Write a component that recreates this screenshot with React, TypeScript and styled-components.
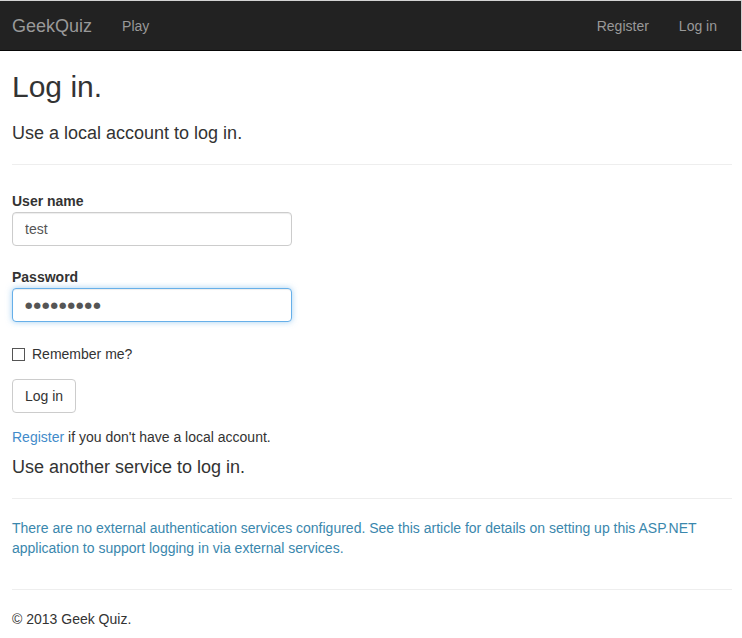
import React from "react";
import styled, { createGlobalStyle } from "styled-components";

const Global = createGlobalStyle`
  html, body { margin: 0; padding: 0; background: #fff; }
  body {
    font-family: "Liberation Sans", Arial, sans-serif;
    font-size: 14px;
    line-height: 1.428571;
    color: #333;
    border-top: 1px solid #d4d4d4;
  }
  * { box-sizing: border-box; }
`;

const Navbar = styled.nav`
  display: flex;
  align-items: center;
  height: 50px;
  background: #222;
  border-bottom: 1px solid #080808;
  border-right: 1px solid #cfcfcf;
  padding: 0 9px 0 12px;
`;

const Brand = styled.a`
  font-size: 18px;
  line-height: 20px;
  color: #999;
  text-decoration: none;
  padding: 0 15px 0 0;
`;

const NavList = styled.ul<{ $right?: boolean }>`
  display: flex;
  list-style: none;
  margin: 0 0 0 ${(p) => (p.$right ? "auto" : "0")};
  padding: 0;
`;

const NavLink = styled.a`
  display: block;
  padding: 0 15px;
  line-height: 20px;
  color: #999;
  text-decoration: none;
`;

const Content = styled.main`
  padding: 0 10px 0 12px;
`;

const Title = styled.h2`
  font-size: 30px;
  font-weight: 500;
  line-height: 1.1;
  margin: 19px 0 21px;
  color: #333;
`;

const Subtitle = styled.h4`
  font-size: 18px;
  font-weight: 500;
  line-height: 1.1;
  margin: 10px 0 10px;
  color: #333;
`;

const Rule = styled.hr`
  border: 0;
  border-top: 1px solid #eee;
  margin: 20px 0;
`;

const FormGroup = styled.div`
  margin-bottom: 15px;
`;

const Label = styled.label`
  display: block;
  font-weight: bold;
  padding-top: 7px;
  margin: 0;
`;

const Input = styled.input<{ $focused?: boolean; $dots?: boolean }>`
  display: block;
  width: 280px;
  height: 34px;
  padding: 6px 12px;
  font-family: ${(p) => (p.$dots ? '"DejaVu Sans", sans-serif' : '"Liberation Sans", Arial, sans-serif')};
  font-size: ${(p) => (p.$dots ? "8.5px" : "14px")};
  letter-spacing: ${(p) => (p.$dots ? "1.1px" : "normal")};
  color: #555;
  background: #fff;
  border: 1px solid ${(p) => (p.$focused ? "#66afe9" : "#ccc")};
  border-radius: 4px;
  box-shadow: ${(p) =>
    p.$focused
      ? "inset 0 1px 1px rgba(0,0,0,.075), 0 0 6px rgba(102,175,233,.6)"
      : "inset 0 1px 1px rgba(0,0,0,.075)"};
  outline: none;
`;

const CheckRow = styled.label`
  display: flex;
  align-items: center;
  gap: 7px;
  padding-top: 7px;
  min-height: 27px;
  line-height: 20px;
`;

const Check = styled.input`
  appearance: none;
  width: 13px;
  height: 13px;
  margin: 1px 0 0;
  border: 1px solid #555;
  background: #fff;
  border-radius: 0;
`;

const Button = styled.button`
  display: inline-block;
  height: 34px;
  padding: 6px 12px;
  font-family: "Liberation Sans", Arial, sans-serif;
  font-size: 14px;
  line-height: 20px;
  color: #333;
  background: #fff;
  border: 1px solid #ccc;
  border-radius: 4px;
`;

const Para = styled.p<{ $info?: boolean }>`
  margin: 0 0 10px;
  color: ${(p) => (p.$info ? "#3a87ad" : "#333")};
`;

const InfoBox = styled.div`
  display: flow-root;
`;

const Link = styled.a`
  color: #428bca;
  text-decoration: none;
`;

const Footer = styled.footer`
  padding-bottom: 8px;
`;

export default function App() {
  return (
    <>
      <Global />
      <Navbar>
        <Brand href="#">GeekQuiz</Brand>
        <NavList>
          <li>
            <NavLink href="#">Play</NavLink>
          </li>
        </NavList>
        <NavList $right>
          <li>
            <NavLink href="#">Register</NavLink>
          </li>
          <li>
            <NavLink href="#">Log in</NavLink>
          </li>
        </NavList>
      </Navbar>
      <Content>
        <Title>Log in.</Title>
        <section>
          <Subtitle>Use a local account to log in.</Subtitle>
          <Rule />
          <FormGroup>
            <Label htmlFor="user">User name</Label>
            <Input id="user" defaultValue="test" readOnly />
          </FormGroup>
          <FormGroup>
            <Label htmlFor="pw">Password</Label>
            <Input id="pw" $focused $dots defaultValue="●●●●●●●●●" readOnly aria-label="Password" />
          </FormGroup>
          <FormGroup>
            <CheckRow>
              <Check type="checkbox" />
              Remember me?
            </CheckRow>
          </FormGroup>
          <FormGroup>
            <Button type="button">Log in</Button>
          </FormGroup>
          <Para>
            <Link href="#">Register</Link> if you don't have a local account.
          </Para>
        </section>
        <section>
          <Subtitle>Use another service to log in.</Subtitle>
          <Rule />
          <InfoBox>
            <Para $info>
              There are no external authentication services configured. See this article for details on setting up
              this ASP.NET application to support logging in via external services.
            </Para>
          </InfoBox>
        </section>
        <Rule />
        <Footer>
          <Para>© 2013 Geek Quiz.</Para>
        </Footer>
      </Content>
    </>
  );
}
